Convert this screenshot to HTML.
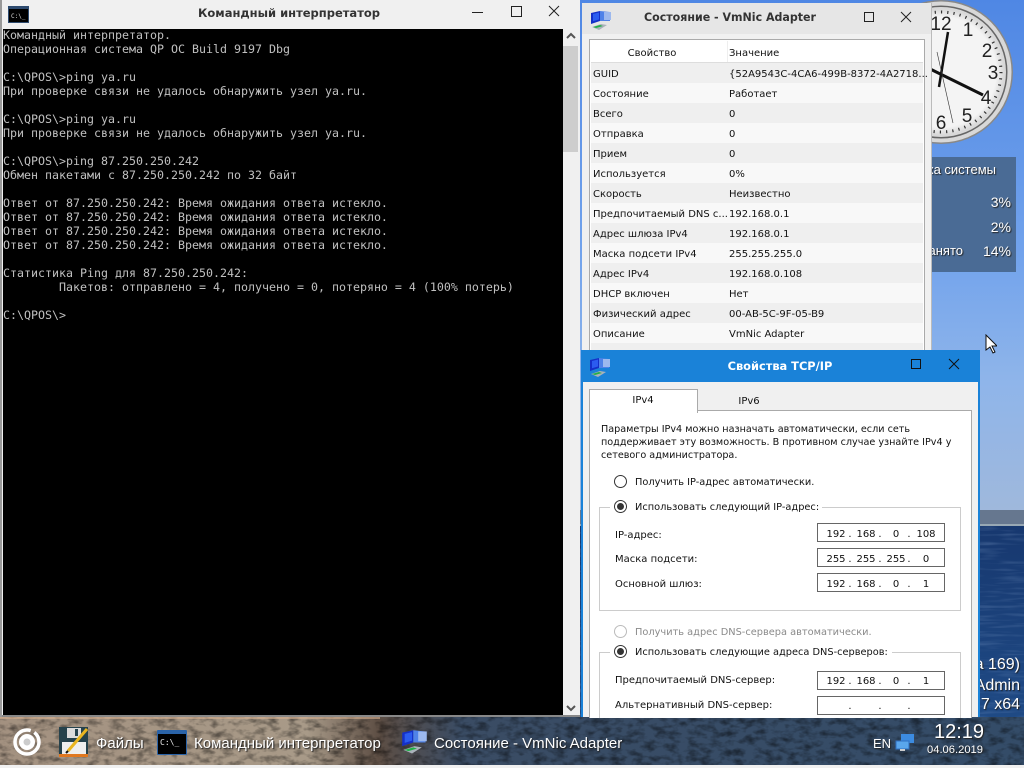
<!DOCTYPE html>
<html><head><meta charset="utf-8">
<style>
html,body{margin:0;padding:0;width:1024px;height:768px;overflow:hidden;background:#5d94ea}
#d{position:relative;width:1024px;height:768px;overflow:hidden;font-family:"DejaVu Sans",sans-serif;font-size:10px;color:#111}
.a{position:absolute}
.t{position:absolute;white-space:nowrap;line-height:14px;transform:translateY(-5px)}
.c{transform:translate(-50%,-5px)}
.n{font-size:9.8px}
.r{position:absolute;width:11px;height:11px;border:1px solid #333;border-radius:50%;background:#fff;left:614px}
.r i{position:absolute;left:2px;top:2px;width:7px;height:7px;border-radius:50%;background:#333}
.f{position:absolute;left:817px;width:126px;height:17px;border:1px solid #666;background:#fff}
.row{position:absolute;left:591px;width:332px;height:20px}
.s{position:absolute;white-space:nowrap;font-family:"Liberation Sans",sans-serif;color:#fff;text-shadow:1px 1px 1px #222}
pre{position:absolute;left:3px;top:28px;margin:0;font:11.63px/14px "DejaVu Sans Mono",monospace;color:#c0c0c0}
</style></head><body><div id="d">

<svg class="a" style="left:0;top:0" width="1024" height="768">
<defs>
<linearGradient id="sky" x1="0" y1="0" x2="0" y2="1"><stop offset="0" stop-color="#4f87e4"/><stop offset=".5" stop-color="#72a3ec"/><stop offset=".75" stop-color="#8fb5ea"/><stop offset="1" stop-color="#9fb8dc"/></linearGradient>
<linearGradient id="sea" x1="0" y1="0" x2="0" y2="1"><stop offset="0" stop-color="#17386f"/><stop offset="1" stop-color="#1f4a85"/></linearGradient>
<linearGradient id="tb" x1="0" y1="0" x2="1" y2="0"><stop offset="0" stop-color="#a39180"/><stop offset=".3" stop-color="#a89a88"/><stop offset=".37" stop-color="#5d4e44"/><stop offset=".45" stop-color="#3a4c64"/><stop offset="1" stop-color="#344c68"/></linearGradient>
<filter id="n" x="0" y="0" width="100%" height="100%"><feTurbulence type="fractalNoise" baseFrequency=".09 .16" numOctaves="3" seed="4"/><feColorMatrix values="0 0 0 0 0  0 0 0 0 0  0 0 0 0 0  0 0 0 2.4 -1.0"/></filter>
<filter id="w" x="0" y="0" width="100%" height="100%"><feTurbulence type="fractalNoise" baseFrequency=".03 .35" numOctaves="2" seed="2"/><feColorMatrix values="0 0 0 0 .35  0 0 0 0 .5  0 0 0 0 .75  0 0 0 1.6 -.75"/></filter>
<radialGradient id="face" cx=".5" cy=".5" r=".5"><stop offset=".85" stop-color="#f4f4f4"/><stop offset=".97" stop-color="#d8d8d8"/></radialGradient>
<symbol id="net" viewBox="0 0 22 22">
<path d="M1 3l9-2v10l-9 3z" fill="#1430c8"/><path d="M3 4l6-1.500v7l-6 1.800z" fill="#2b5cf0"/>
<path d="M10 1l10 1v9l-10 0z" fill="#4f82e8"/><path d="M14 2h7v8h-7z" fill="#9db9ee"/>
<path d="M2 17l9-3 6 1-8 5z" fill="#aab2ba"/><path d="M3 17l7-2 3 1-7 2z" fill="#22b048"/>
</symbol>
</defs>
<rect width="1024" height="510" fill="url(#sky)"/>
<rect y="510" width="1024" height="15" fill="#66778f"/>
<rect y="524" width="1024" height="2" fill="#98a8b4"/>
<rect y="526" width="1024" height="194" fill="url(#sea)"/>
<rect y="526" width="1024" height="194" filter="url(#w)" opacity=".3"/>
<rect x="0" y="717" width="1024" height="49" fill="url(#tb)"/>
<rect x="0" y="717" width="1024" height="49" filter="url(#n)" opacity=".45"/>
<rect x="0" y="717" width="380" height="2" fill="#d8b090" opacity=".6"/>
<rect y="765" width="1024" height="3" fill="#f0f0f0"/>
<!-- clock -->
<circle cx="941" cy="72" r="72" fill="#888"/>
<circle cx="941" cy="72" r="70.500" fill="#d8d8d8"/>
<circle cx="941" cy="72" r="66.500" fill="#666"/>
<circle cx="941" cy="72" r="65" fill="url(#face)"/>
<circle cx="941" cy="72" r="60" fill="none" stroke="#333" stroke-width="3" stroke-dasharray="1.2 5.08"/>
<g font-family="Liberation Sans,sans-serif" font-size="19" fill="#222" text-anchor="middle">
<text x="941" y="30">12</text><text x="968" y="36">1</text><text x="987" y="57">2</text><text x="993" y="79">3</text><text x="986" y="104">4</text><text x="967" y="122">5</text><text x="941" y="129">6</text>
</g>
<path d="M948 32L939 87" stroke="#111" stroke-width="2.500"/>
<path d="M983 95L920 64" stroke="#111" stroke-width="3"/>
<path d="M937 52L953 123" stroke="#333" stroke-width=".6"/>
<!-- gadget -->
<rect x="920" y="157" width="96" height="115" fill="#4a6b95"/>
</svg>

<span class="s" style="right:28px;top:162px;font-size:13px">ка системы</span>
<span class="s" style="right:13px;top:194px;font-size:14px">3%</span>
<span class="s" style="right:13px;top:219px;font-size:14px">2%</span>
<span class="s" style="right:61px;top:243px;font-size:13px">занято</span>
<span class="s" style="right:13px;top:243px;font-size:14px">14%</span>
<span class="s" style="right:4px;top:656px;font-size:16px">а 169)</span>
<span class="s" style="right:4px;top:677px;font-size:16px">Admin</span>
<span class="s" style="right:4px;top:696px;font-size:16px">7 x64</span>

<!-- Console -->
<div class="a" style="left:0;top:0;width:580px;height:717px;background:#f0f0f0"></div>
<div class="a" style="left:3px;top:29px;width:560px;height:686px;background:#000"></div>
<div class="a" style="left:563px;top:46px;width:15px;height:106px;background:#cdcdcd"></div>
<div class="a" style="left:0;top:715px;width:580px;height:2px;background:#888"></div>
<div class="a" style="left:0;top:0;width:2px;height:717px;background:#999"></div>
<svg class="a" style="left:566px;top:32px" width="10" height="8"><path d="M1 6l4-4 4 4" fill="none" stroke="#555" stroke-width="2"/></svg>
<svg class="a" style="left:566px;top:704px" width="10" height="8"><path d="M1 2l4 4 4-4" fill="none" stroke="#555" stroke-width="2"/></svg>
<svg class="a" style="left:8px;top:6px" width="21" height="17"><rect width="21" height="17" fill="#2d4a6e"/><rect x="1" y="3" width="19" height="13" fill="#000"/><text x="3" y="12" font-family="DejaVu Sans Mono" font-size="6" fill="#ddd">C:\_</text></svg>
<span class="t c" style="left:289px;top:11px;font-weight:bold;font-size:11.5px;color:#333">Командный интерпретатор</span>
<svg class="a" style="left:470px;top:3px" width="95" height="16" fill="none" stroke="#222"><path d="M2 9.500h11"/><rect x="41.500" y="3.500" width="10" height="10"/><path d="M79 3l10 10M89 3L79 13"/></svg>
<pre>Командный интерпретатор.
Операционная система QP ОС Build 9197 Dbg

C:\QPOS\&gt;ping ya.ru
При проверке связи не удалось обнаружить узел ya.ru.

C:\QPOS\&gt;ping ya.ru
При проверке связи не удалось обнаружить узел ya.ru.

C:\QPOS\&gt;ping 87.250.250.242
Обмен пакетами с 87.250.250.242 по 32 байт

Ответ от 87.250.250.242: Время ожидания ответа истекло.
Ответ от 87.250.250.242: Время ожидания ответа истекло.
Ответ от 87.250.250.242: Время ожидания ответа истекло.
Ответ от 87.250.250.242: Время ожидания ответа истекло.

Статистика Ping для 87.250.250.242:
        Пакетов: отправлено = 4, получено = 0, потеряно = 4 (100% потерь)

C:\QPOS\&gt;</pre>

<!-- Status window -->
<div class="a" style="left:582px;top:3px;width:349px;height:350px;background:#f0f0f0;border-right:1px solid #bbb"></div>
<div class="a" style="left:582px;top:3px;width:349px;height:31px;background:#e6e6e6"></div>
<svg class="a" style="left:590px;top:10px" width="22" height="22"><use href="#net"/></svg>
<span class="t c" style="left:730px;top:16px;font-weight:bold;font-size:11.05px;color:#333">Состояние - VmNic Adapter</span>
<svg class="a" style="left:860px;top:8px" width="56" height="16" fill="none" stroke="#222"><rect x="4.500" y="4.500" width="9" height="9"/><path d="M41 4l10 10M51 4L41 14"/></svg>
<div class="a" style="left:589px;top:39px;width:334px;height:320px;background:#fff;border:1px solid #aaa"></div>
<div class="a" style="left:727px;top:41px;width:1px;height:22px;background:#eee"></div>
<div class="a" style="left:591px;top:62px;width:332px;height:1px;background:#ddd"></div>
<div class="row" style="top:63px;background:#efefef"></div>
<div class="row" style="top:83px;background:#f8f8f8"></div>
<div class="row" style="top:103px;background:#efefef"></div>
<div class="row" style="top:123px;background:#f8f8f8"></div>
<div class="row" style="top:143px;background:#efefef"></div>
<div class="row" style="top:163px;background:#f8f8f8"></div>
<div class="row" style="top:183px;background:#efefef"></div>
<div class="row" style="top:203px;background:#f8f8f8"></div>
<div class="row" style="top:223px;background:#efefef"></div>
<div class="row" style="top:243px;background:#f8f8f8"></div>
<div class="row" style="top:263px;background:#efefef"></div>
<div class="row" style="top:283px;background:#f8f8f8"></div>
<div class="row" style="top:303px;background:#efefef"></div>
<div class="row" style="top:323px;background:#f8f8f8"></div>
<div class="row" style="top:343px;background:#efefef"></div>
<span class="t c" style="left:652px;top:52px">Свойство</span><span class="t" style="left:729px;top:52px">Значение</span>
<span class="t" style="left:593px;top:73px">GUID</span><span class="t" style="left:729px;top:73px">{52A9543C-4CA6-499B-8372-4A2718...</span>
<span class="t" style="left:593px;top:93px">Состояние</span><span class="t" style="left:729px;top:93px">Работает</span>
<span class="t" style="left:593px;top:113px">Всего</span><span class="t" style="left:729px;top:113px">0</span>
<span class="t" style="left:593px;top:133px">Отправка</span><span class="t" style="left:729px;top:133px">0</span>
<span class="t" style="left:593px;top:153px">Прием</span><span class="t" style="left:729px;top:153px">0</span>
<span class="t" style="left:593px;top:173px">Используется</span><span class="t" style="left:729px;top:173px">0%</span>
<span class="t" style="left:593px;top:193px">Скорость</span><span class="t" style="left:729px;top:193px">Неизвестно</span>
<span class="t" style="left:593px;top:213px">Предпочитаемый DNS с...</span><span class="t" style="left:729px;top:213px">192.168.0.1</span>
<span class="t" style="left:593px;top:233px">Адрес шлюза IPv4</span><span class="t" style="left:729px;top:233px">192.168.0.1</span>
<span class="t" style="left:593px;top:253px">Маска подсети IPv4</span><span class="t" style="left:729px;top:253px">255.255.255.0</span>
<span class="t" style="left:593px;top:273px">Адрес IPv4</span><span class="t" style="left:729px;top:273px">192.168.0.108</span>
<span class="t" style="left:593px;top:293px">DHCP включен</span><span class="t" style="left:729px;top:293px">Нет</span>
<span class="t" style="left:593px;top:313px">Физический адрес</span><span class="t" style="left:729px;top:313px">00-AB-5C-9F-05-B9</span>
<span class="t" style="left:593px;top:333px">Описание</span><span class="t" style="left:729px;top:333px">VmNic Adapter</span>
<span class="t" style="left:593px;top:353px">Имя</span><span class="t" style="left:729px;top:353px">Сетевое подключение 1</span>

<!-- TCP window -->
<div class="a" style="left:581px;top:350px;width:399px;height:367px;background:#1a82d8"></div>
<div class="a" style="left:583px;top:382px;width:395px;height:335px;background:#f0f0f0"></div>
<svg class="a" style="left:589px;top:357px" width="22" height="22"><use href="#net"/></svg>
<span class="t c" style="left:780px;top:364px;font-weight:bold;font-size:11.4px;color:#fff">Свойства TCP/IP</span>
<svg class="a" style="left:905px;top:356px" width="58" height="16" fill="none" stroke="#111"><rect x="6.500" y="3.500" width="9" height="9"/><path d="M44 3l10 10M54 3L44 13"/></svg>
<div class="a" style="left:589px;top:410px;width:381px;height:307px;background:#fff;border:1px solid #aaa;border-bottom:0"></div>
<div class="a" style="left:589px;top:389px;width:107px;height:23px;background:#fff;border:1px solid #aaa;border-bottom:0"></div>
<span class="t c" style="left:643px;top:399px">IPv4</span>
<span class="t c" style="left:749px;top:400px">IPv6</span>
<span class="t" style="left:601px;top:428px;font-size:9.65px">Параметры IPv4 можно назначать автоматически, если сеть</span>
<span class="t" style="left:601px;top:441px;font-size:9.65px">поддерживает эту возможность. В противном случае узнайте IPv4 у</span>
<span class="t" style="left:601px;top:454px;font-size:9.65px">сетевого администратора.</span>
<div class="r" style="top:475px"></div>
<span class="t n" style="left:635px;top:481px">Получить IP-адрес автоматически.</span>
<div class="a" style="left:599px;top:507px;width:360px;height:102px;border:1px solid #ccc"></div>
<div class="a" style="left:610px;top:500px;width:212px;height:14px;background:#fff"></div>
<div class="r" style="top:500px"><i></i></div>
<span class="t n" style="left:635px;top:506px">Использовать следующий IP-адрес:</span>
<span class="t" style="left:615px;top:534px">IP-адрес:</span><div class="f" style="top:523px"></div>
<span class="t" style="left:615px;top:558px">Маска подсети:</span><div class="f" style="top:548px"></div>
<span class="t" style="left:615px;top:583px">Основной шлюз:</span><div class="f" style="top:573px"></div>

<span class="t c" style="left:836px;top:533px">192</span><span class="t c" style="left:850px;top:533px">.</span><span class="t c" style="left:866px;top:533px">168</span><span class="t c" style="left:880px;top:533px">.</span><span class="t c" style="left:896px;top:533px">0</span><span class="t c" style="left:909px;top:533px">.</span><span class="t c" style="left:926px;top:533px">108</span>
<span class="t c" style="left:836px;top:558px">255</span><span class="t c" style="left:850px;top:558px">.</span><span class="t c" style="left:866px;top:558px">255</span><span class="t c" style="left:880px;top:558px">.</span><span class="t c" style="left:896px;top:558px">255</span><span class="t c" style="left:909px;top:558px">.</span><span class="t c" style="left:926px;top:558px">0</span>
<span class="t c" style="left:836px;top:583px">192</span><span class="t c" style="left:850px;top:583px">.</span><span class="t c" style="left:866px;top:583px">168</span><span class="t c" style="left:880px;top:583px">.</span><span class="t c" style="left:896px;top:583px">0</span><span class="t c" style="left:909px;top:583px">.</span><span class="t c" style="left:926px;top:583px">1</span>

<div class="r" style="top:625px;border-color:#bbb"></div>
<span class="t n" style="left:635px;top:631px;color:#8a8a8a">Получить адрес DNS-сервера автоматически.</span>
<div class="a" style="left:599px;top:652px;width:360px;height:65px;border:1px solid #ccc;border-bottom:0"></div>
<div class="a" style="left:610px;top:645px;width:282px;height:14px;background:#fff"></div>
<div class="r" style="top:645px"><i></i></div>
<span class="t n" style="left:635px;top:651px">Использовать следующие адреса DNS-серверов:</span>
<span class="t" style="left:615px;top:679px">Предпочитаемый DNS-сервер:</span><div class="f" style="top:671px"></div>
<span class="t" style="left:615px;top:704px">Альтернативный DNS-сервер:</span><div class="f" style="top:696px"></div>
<span class="t c" style="left:836px;top:680px">192</span><span class="t c" style="left:850px;top:680px">.</span><span class="t c" style="left:866px;top:680px">168</span><span class="t c" style="left:880px;top:680px">.</span><span class="t c" style="left:896px;top:680px">0</span><span class="t c" style="left:909px;top:680px">.</span><span class="t c" style="left:926px;top:680px">1</span>
<span class="t c" style="left:850px;top:705px">.</span><span class="t c" style="left:880px;top:705px">.</span><span class="t c" style="left:909px;top:705px">.</span>

<!-- cursor -->
<svg class="a" style="left:985px;top:334px" width="12" height="20"><path d="M1 1v15l4-3 3 6 2-1-3-6h5z" fill="#fff" stroke="#111" stroke-width="1"/></svg>

<!-- Taskbar -->
<svg class="a" style="left:10px;top:728px" width="34" height="28"><circle cx="17" cy="14" r="12" fill="none" stroke="#fff" stroke-width="3.500" stroke-dasharray="60 4 11 4"/><circle cx="17" cy="14" r="8" fill="#fff"/><circle cx="17" cy="14" r="3.500" fill="#ccc"/></svg>
<svg class="a" style="left:59px;top:727px" width="30" height="31"><rect width="29" height="30" fill="#26424c"/><rect x="8" y="1" width="14" height="10" fill="#dcdcdc"/><rect x="16" y="2" width="3" height="7" fill="#26424c"/><rect x="3" y="15" width="24" height="12" fill="#eee"/><rect y="27" width="29" height="3" fill="#e07820"/><path d="M9 24L28 2" stroke="#e9b520" stroke-width="3"/><path d="M9 24l-2 2" stroke="#111" stroke-width="2"/></svg>
<svg class="a" style="left:157px;top:730px" width="30" height="25"><rect width="30" height="25" rx="1" fill="#2a63a8"/><rect x="1" y="4" width="28" height="20" fill="#000"/><text x="3" y="15" font-family="DejaVu Sans Mono" font-size="8" fill="#eee">C:\_</text></svg>
<svg class="a" style="left:401px;top:729px" width="27" height="27"><use href="#net"/></svg>
<svg class="a" style="left:895px;top:733px" width="21" height="20"><rect x="6" y="1" width="13" height="9" fill="#3c8be0"/><rect x="1" y="8" width="13" height="8" fill="#5aa6ec" stroke="#2f6fc0"/><rect x="5" y="16" width="5" height="2" fill="#ccc"/></svg>
<span class="s" style="left:96px;top:735px;font-size:15px">Файлы</span>
<span class="s" style="left:194px;top:735px;font-size:15px">Командный интерпретатор</span>
<span class="s" style="left:434px;top:735px;font-size:15px">Состояние - VmNic Adapter</span>
<span class="s" style="left:873px;top:736px;font-size:13px">EN</span>
<span class="s" style="left:934px;top:721px;font-size:20px">12:19</span>
<span class="s" style="left:927px;top:744px;font-size:11.2px">04.06.2019</span>
</div></body></html>
